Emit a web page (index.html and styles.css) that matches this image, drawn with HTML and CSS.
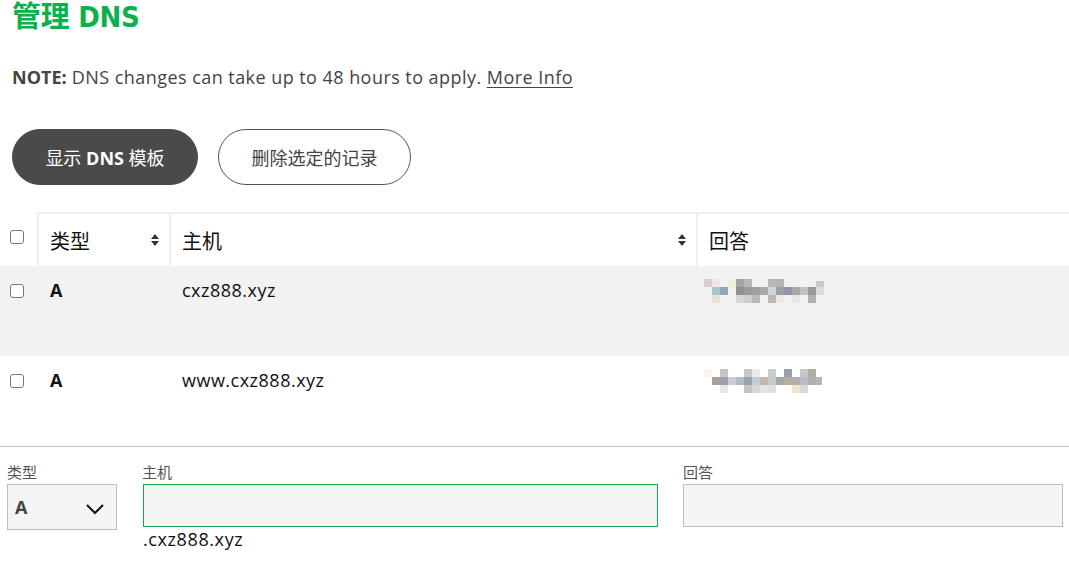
FILE: index.html
```html
<!DOCTYPE html>
<html lang="zh">
<head>
<meta charset="utf-8">
<title>管理 DNS</title>
<link rel="stylesheet" href="styles.css">
</head>
<body>
<div class="page">
  <h1 class="title">管理 DNS</h1>
  <p class="note"><b>NOTE:</b> DNS changes can take up to 48 hours to apply. <a href="#" class="more">More Info</a></p>
  <div class="actions">
    <button class="btn btn-dark">显示 <b>DNS</b> 模板</button>
    <button class="btn btn-outline">删除选定的记录</button>
  </div>
</div>

<div class="table">
  <div class="thead">
    <div class="cell c-check"><span class="cb"></span></div>
    <div class="cell c-type th">类型<svg class="sort" viewBox="0 0 8 12"><path d="M4 0 L8 5 H0 Z M0 7 H8 L4 12 Z"/></svg></div>
    <div class="cell c-host th">主机<svg class="sort" viewBox="0 0 8 12"><path d="M4 0 L8 5 H0 Z M0 7 H8 L4 12 Z"/></svg></div>
    <div class="cell c-ans th">回答</div>
  </div>
  <div class="row row-grey">
    <div class="cell c-check"><span class="cb"></span></div>
    <div class="cell c-type td"><b>A</b></div>
    <div class="cell c-host td">cxz888.xyz</div>
    <div class="cell c-ans td">
      <svg class="blur" width="128" height="24" viewBox="0 0 128 24">
        <rect x="0" y="0" width="8" height="8" fill="#d8d0cc"/>
        <rect x="8" y="0" width="8" height="8" fill="#eee9e6"/>
        <rect x="24" y="0" width="8" height="8" fill="#f3ece0"/>
        <rect x="32" y="0" width="8" height="8" fill="#a4a4ae"/>
        <rect x="40" y="0" width="8" height="8" fill="#b8b8b4"/>
        <rect x="64" y="0" width="8" height="8" fill="#b8b8b4"/>
        <rect x="72" y="0" width="8" height="8" fill="#b0b4b8"/>
        <rect x="80" y="0" width="8" height="8" fill="#eef0f2"/>
        <rect x="112" y="2" width="8" height="6" fill="#c8c8cc"/>
        <rect x="8" y="8" width="8" height="8" fill="#a8c4cc"/>
        <rect x="16" y="8" width="8" height="8" fill="#90a8c0"/>
        <rect x="32" y="8" width="8" height="8" fill="#909090"/>
        <rect x="40" y="8" width="8" height="8" fill="#9a9aa0"/>
        <rect x="48" y="8" width="8" height="8" fill="#a0a0a0"/>
        <rect x="56" y="8" width="8" height="8" fill="#a8a8a8"/>
        <rect x="64" y="8" width="8" height="8" fill="#d0d4d8"/>
        <rect x="72" y="8" width="8" height="8" fill="#9aa0a4"/>
        <rect x="80" y="8" width="8" height="8" fill="#9098a8"/>
        <rect x="88" y="8" width="8" height="8" fill="#a8a8a8"/>
        <rect x="96" y="8" width="8" height="8" fill="#c0c0c0"/>
        <rect x="104" y="8" width="8" height="8" fill="#9898a0"/>
        <rect x="112" y="8" width="8" height="8" fill="#d8dce0"/>
        <rect x="8" y="16" width="8" height="8" fill="#e8e0dc"/>
        <rect x="32" y="16" width="8" height="8" fill="#d8d8d8"/>
        <rect x="40" y="16" width="8" height="8" fill="#d0d0d0"/>
        <rect x="48" y="16" width="8" height="8" fill="#b8b8b8"/>
        <rect x="64" y="16" width="8" height="8" fill="#c0b8b8"/>
        <rect x="72" y="16" width="8" height="8" fill="#eaeaea"/>
        <rect x="88" y="16" width="8" height="8" fill="#e8e8e8"/>
        <rect x="104" y="16" width="8" height="8" fill="#b0b0b0"/>
      </svg>
    </div>
  </div>
  <div class="row">
    <div class="cell c-check"><span class="cb"></span></div>
    <div class="cell c-type td"><b>A</b></div>
    <div class="cell c-host td">www.cxz888.xyz</div>
    <div class="cell c-ans td">
      <svg class="blur" width="128" height="24" viewBox="0 0 128 24">
        <rect x="0" y="0" width="8" height="8" fill="#faf6ee"/>
        <rect x="16" y="0" width="8" height="8" fill="#ccc4c4"/>
        <rect x="40" y="0" width="8" height="8" fill="#c4c6cc"/>
        <rect x="48" y="0" width="8" height="8" fill="#e8ecf0"/>
        <rect x="64" y="0" width="8" height="8" fill="#c8cccc"/>
        <rect x="80" y="0" width="8" height="8" fill="#9a9cb0"/>
        <rect x="96" y="0" width="8" height="8" fill="#c8c8c8"/>
        <rect x="104" y="0" width="8" height="8" fill="#b0aca8"/>
        <rect x="8" y="8" width="8" height="8" fill="#a8a0a0"/>
        <rect x="16" y="8" width="8" height="8" fill="#a0a0a8"/>
        <rect x="24" y="8" width="8" height="8" fill="#c8ccd4"/>
        <rect x="32" y="8" width="8" height="8" fill="#b0bccc"/>
        <rect x="40" y="8" width="8" height="8" fill="#a0a0a8"/>
        <rect x="48" y="8" width="8" height="8" fill="#c4ccd8"/>
        <rect x="56" y="8" width="8" height="8" fill="#c4b8a8"/>
        <rect x="64" y="8" width="8" height="8" fill="#c0ccd0"/>
        <rect x="72" y="8" width="8" height="8" fill="#a8a8a8"/>
        <rect x="80" y="8" width="8" height="8" fill="#b8ac9c"/>
        <rect x="88" y="8" width="8" height="8" fill="#b0b0b0"/>
        <rect x="96" y="8" width="8" height="8" fill="#b8bcc8"/>
        <rect x="104" y="8" width="8" height="8" fill="#b0b0b0"/>
        <rect x="112" y="8" width="6" height="8" fill="#b4b4c4"/>
        <rect x="16" y="16" width="8" height="8" fill="#e8e8e8"/>
        <rect x="40" y="16" width="8" height="8" fill="#c8c4c4"/>
        <rect x="48" y="16" width="8" height="8" fill="#d8d8dc"/>
        <rect x="56" y="16" width="8" height="8" fill="#e4e4e8"/>
        <rect x="64" y="16" width="8" height="8" fill="#e0e0e0"/>
        <rect x="88" y="16" width="8" height="8" fill="#ece4cc"/>
        <rect x="96" y="16" width="8" height="8" fill="#d8d8d8"/>
      </svg>
    </div>
  </div>
</div>

<form class="form">
  <div class="field f-type">
    <label class="label">类型</label>
    <div class="select"><b>A</b><svg class="chev" viewBox="0 0 20 12"><path d="M2 2 L10 10 L18 2" fill="none" stroke="#111" stroke-width="2"/></svg></div>
  </div>
  <div class="field f-host">
    <label class="label">主机</label>
    <div class="input input-active"></div>
    <div class="suffix">.cxz888.xyz</div>
  </div>
  <div class="field f-ans">
    <label class="label">回答</label>
    <div class="input"></div>
  </div>
</form>
</body>
</html>
```
FILE: styles.css
```css
* { box-sizing: border-box; }
body {
  margin: 0;
  background: #fff;
  font-family: "Open Sans", "Noto Sans CJK SC", sans-serif;
  color: #111;
  overflow: hidden;
}
.page { padding: 0 0 0 12px; }
.title {
  margin: 0;
  height: 36px;
  font-family: "DejaVu Sans Condensed", "Noto Sans CJK SC", sans-serif;
  font-weight: 700;
  font-size: 29px;
  line-height: 34px;
  color: #0cb14b;
  letter-spacing: -0.3px;
}
.note {
  margin: 28px 0 0;
  font-size: 18px;
  line-height: 26px;
  color: #444;
  letter-spacing: 0.45px;
}
.note b { font-weight: 700; letter-spacing: 0; }
.more { color: #444; text-decoration: underline; text-underline-offset: 3px; }
.actions {
  display: flex;
  gap: 20px;
  margin-top: 39px;
}
.btn {
  height: 56px;
  border-radius: 28px;
  font-family: "Open Sans", "Noto Sans CJK SC", sans-serif;
  font-size: 18px;
  padding: 0;
}
.btn-dark {
  width: 186px;
  background: #4a4a4a;
  border: 1px solid #4a4a4a;
  color: #fff;
}
.btn-outline {
  width: 193px;
  background: #fff;
  border: 1px solid #555;
  color: #444;
}

.table { margin-top: 27px; }
.thead, .row { display: flex; }
.thead { height: 54px; }
.row { height: 90px; }
.row-grey { background: #f2f2f2; }
.row:last-child { border-bottom: 1px solid #c8c8c8; height: 91px; }
.cell { display: flex; }
.c-check { width: 37px; padding-left: 10px; }
.c-type { width: 132px; }
.c-host { width: 527px; }
.c-ans { flex: 1; }
.thead .c-check { align-items: center; padding-bottom: 4px; }
.th {
  border-top: 2px solid #eee;
  border-left: 2px solid #eee;
  align-items: center;
  font-size: 20px;
  padding-left: 11px;
  padding-right: 10px;
  justify-content: space-between;
  font-family: "Noto Sans CJK SC", sans-serif;
  color: #111;
}
.sort { width: 8px; height: 12px; fill: #333; }
.row .c-check { padding-top: 18px; }
.cb {
  display: block;
  width: 14px;
  height: 14px;
  border: 1px solid #767676;
  border-radius: 3px;
  background: #fff;
}
.td {
  padding-top: 12px;
  font-size: 18px;
  line-height: 24px;
  color: #111;
  letter-spacing: 0.5px;
}
.c-type.td { padding-left: 13px; }
.c-host.td { padding-left: 13px; }
.c-ans.td { padding-left: 8px; padding-top: 13px; }
.td b { font-weight: 700; }

.form {
  display: flex;
  padding: 15px 6px 0 7px;
}
.field { display: flex; flex-direction: column; }
.f-type { width: 110px; margin-right: 25px; }
.f-host { width: 516px; margin-right: 25px; }
.f-ans { flex: 1; }
.label {
  font-family: "Noto Sans CJK SC", sans-serif;
  font-size: 15px;
  line-height: 20px;
  color: #555;
  margin-bottom: 2px;
}
.select {
  height: 46px;
  background: #f5f5f5;
  border: 1px solid #bbb;
  display: flex;
  align-items: center;
  justify-content: space-between;
  padding: 0 11px 0 7px;
  font-size: 18px;
  color: #444;
}
.select b { font-weight: 700; }
.chev { width: 20px; height: 12px; margin-top: 4px; }
.input {
  height: 43px;
  background: #f5f5f5;
  border: 1px solid #bbb;
}
.input-active { border-color: #1aa551; }
.f-host .input { margin-left: 1px; }
.suffix {
  font-size: 18px;
  line-height: 24px;
  color: #111;
  margin-left: 1px;
  letter-spacing: 0.6px;
}
```
